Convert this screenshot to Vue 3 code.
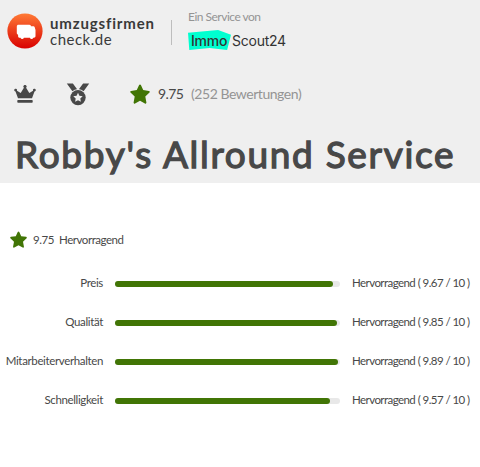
<template>
  <div class="page">
    <header class="header">
      <div class="brand-row">
        <svg class="logo" viewBox="0 0 36 36">
          <defs>
            <linearGradient id="logoFill" x1="0" y1="0" x2="0" y2="1">
              <stop offset="0" stop-color="#ff7a35" />
              <stop offset="1" stop-color="#d90000" />
            </linearGradient>
          </defs>
          <circle cx="18" cy="18" r="17.6" fill="url(#logoFill)" />
          <path fill="#fff" d="M11.500 11.800h11a1.500 1.500 0 0 1 1.500 1.500h2.100c.9 0 1.500.5 1.700 1.300l.7 2.400v6.100c0 1-.6 1.600-1.600 1.600h-.6a1.800 1.800 0 0 1-3.400 0h-6a1.800 1.800 0 0 1-3.400 0h-.9c-.9 0-1.500-.6-1.500-1.500v-1.200L9.800 20.500v-7.100c0-1 .7-1.600 1.700-1.600z" />
        </svg>
        <div class="brand">
          <strong class="brand-top">umzugsfirmen</strong>
          <span class="brand-bottom">check.de</span>
        </div>
        <div class="divider"></div>
        <div class="partner">
          <span class="partner-label">Ein Service von</span>
          <div class="scout">
            <span class="immo">Immo</span>
            <span class="scout-name">Scout24</span>
          </div>
        </div>
      </div>

      <div class="badges">
        <svg class="crown" viewBox="0 0 22 18">
          <path fill="#484848" d="M4 13.200 1.500 6.500A1.400 1.400 0 1 1 2.900 5.700L6.700 8 9.900 2.700a1.600 1.600 0 1 1 2.200 0L15.300 8l3.800-2.300a1.400 1.400 0 1 1 1.400.8L18 13.200z" />
          <rect x="3.300" y="15" width="15.400" height="2.700" rx=".7" fill="#484848" />
        </svg>
        <svg class="medal" viewBox="0 0 24 23">
          <path fill="#484848" d="M.8.400h6.100l4.400 6.200-4.700 1.900zM23.200.400h-6.100l-4.400 6.200 4.700 1.900z" />
          <circle cx="12" cy="14.600" r="8.600" fill="#efefef" />
          <circle cx="12" cy="14.600" r="7.700" fill="#484848" />
          <path fill="#efefef" d="m12 9.800 1.400 3 3.300.4-2.400 2.300.6 3.300-2.900-1.600-2.900 1.600.6-3.300-2.400-2.300 3.300-.4z" />
        </svg>
        <svg class="star star-big" viewBox="0 0 20 20"><path :d="starPath" /></svg>
        <span class="score">9.75</span>
        <span class="count">(252 Bewertungen)</span>
      </div>

      <h1 class="title">Robby's Allround Service</h1>
    </header>

    <section class="ratings">
      <div class="summary">
        <svg class="star star-small" viewBox="0 0 20 20"><path :d="starPath" /></svg>
        <span class="summary-score">9.75</span>
        <span>Hervorragend</span>
      </div>
      <div v-for="r in ratings" :key="r.name" class="rating-row">
        <span class="rating-name">{{ r.name }}</span>
        <div class="track">
          <div class="fill" :style="{ width: r.value * 10 + '%' }"></div>
        </div>
        <span class="rating-text">Hervorragend ( {{ r.value }} / 10 )</span>
      </div>
    </section>
  </div>
</template>

<script setup>
const starPath = 'M9.100 1.100a1 1 0 0 1 1.800 0l2.300 5 5.700.8a1 1 0 0 1 .6 1.700l-4.200 4 1.100 5.900a1 1 0 0 1-1.500 1L10 16.800l-4.900 2.700a1 1 0 0 1-1.500-1l1.100-5.900-4.200-4a1 1 0 0 1 .6-1.700l5.700-.8z';

const ratings = [
  { name: 'Preis', value: 9.67 },
  { name: 'Qualität', value: 9.85 },
  { name: 'Mitarbeiterverhalten', value: 9.89 },
  { name: 'Schnelligkeit', value: 9.57 }
];
</script>

<style>
body { margin: 0; background: #fff; }
</style>

<style scoped>
.page { width: 480px; height: 467px; overflow: hidden; font-family: Lato, sans-serif; color: #484848; background: #fff; }
.header { height: 183px; background: #efefef; overflow: hidden; }
.brand-row { display: flex; height: 65px; padding-left: 7px; box-sizing: border-box; }
.logo { width: 36px; height: 36px; margin-top: 13px; flex: none; }
.brand {
  display: flex; flex-direction: column; width: 121px; margin: 15px 0 0 7px;
  font-size: 15px; line-height: 16px; color: #3a3a3a;
}
.brand-top { letter-spacing: 0.85px; white-space: nowrap; }
.brand-bottom { letter-spacing: 0.5px; }
.divider { width: 1px; height: 25px; margin-top: 20px; background: #bdbdbd; }
.partner { margin-left: 16px; padding-top: 9px; }
.partner-label { display: block; font-size: 12px; line-height: 16px; letter-spacing: -0.5px; color: #949494; white-space: nowrap; }
.scout {
  display: flex; align-items: center; height: 20px; margin-top: 5px;
  font-family: Inter, sans-serif; font-size: 14px; color: #333; letter-spacing: -0.25px;
}
.immo {
  width: 43px; height: 20px; line-height: 21px; padding-left: 3px; box-sizing: border-box;
  font-weight: 500; background: #00ffd0;
  clip-path: polygon(0 14%, 70% 0, 100% 24%, 91% 100%, 50% 90%, 3% 100%);
}
.scout-name { margin-left: 1px; line-height: 21px; }
.badges { display: flex; align-items: center; height: 58px; padding-left: 14px; }
.crown { width: 22px; height: 18px; }
.medal { width: 24px; height: 23px; margin-left: 30px; }
.star { fill: #417505; }
.star-big { width: 20px; height: 20px; margin-left: 40px; }
.score { width: 33px; margin: -2px 0 0 8px; font-size: 14px; letter-spacing: -0.6px; }
.count { margin-top: -2px; font-size: 14px; letter-spacing: -0.45px; color: #949494; }
.title {
  margin: 4px 0 0 15px; font-size: 37px; line-height: 54px;
  font-weight: 400; letter-spacing: 1.68px; white-space: nowrap; -webkit-text-stroke: 1.3px #484848;
}
.ratings { padding-top: 46px; font-size: 11.5px; }
.summary { display: flex; align-items: center; height: 20px; padding-left: 10px; margin-bottom: 14px; letter-spacing: -0.45px; }
.star-small { width: 17px; height: 17px; margin-top: 1px; }
.summary-score { width: 26px; margin-left: 6px; }
.rating-row { display: flex; align-items: center; height: 39px; }
.rating-name { flex: none; width: 103px; text-align: right; white-space: nowrap; letter-spacing: -0.36px; }
.track { flex: none; width: 225px; height: 6px; margin: 2px 12px 0; border-radius: 3px; background: #e8e8e8; }
.fill { height: 6px; border-radius: 3px; background: #417505; }
.rating-text { white-space: nowrap; letter-spacing: -0.56px; }
</style>
